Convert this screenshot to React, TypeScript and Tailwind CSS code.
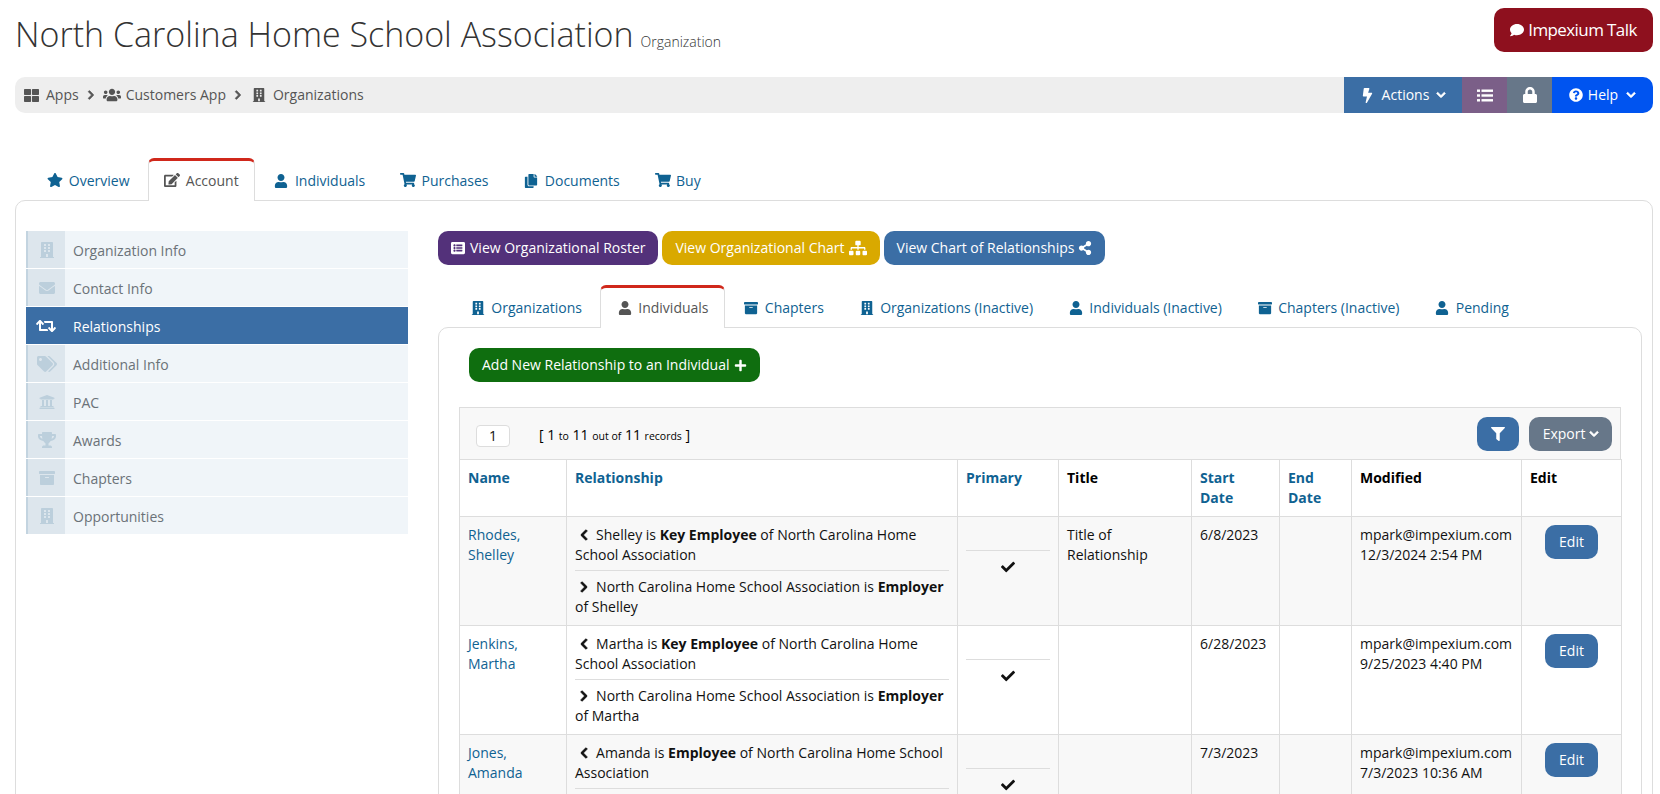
import type { ComponentType, ReactNode } from "react";
import {
  FaArchive,
  FaBolt,
  FaBuilding,
  FaCheck,
  FaChevronDown,
  FaChevronLeft,
  FaChevronRight,
  FaComment,
  FaCopy,
  FaEdit,
  FaEnvelope,
  FaFilter,
  FaListAlt,
  FaLock,
  FaPlus,
  FaQuestionCircle,
  FaRetweet,
  FaShareAlt,
  FaShoppingCart,
  FaSitemap,
  FaStar,
  FaTags,
  FaThLarge,
  FaTrophy,
  FaUniversity,
  FaUser,
  FaUsers,
} from "react-icons/fa";

type IconType = ComponentType<{ size?: number; className?: string }>;

// icono de ancho fijo seguido de un espacio, como fa-fw
function Fw({ icon: Icon, size = 14 }: { icon: IconType; size?: number }) {
  return (
    <span className="inline-flex w-[17.5px] mr-[4.8px] justify-center align-[-2px]">
      <Icon size={size} />
    </span>
  );
}

function Chevron({ icon: Icon }: { icon: IconType }) {
  return (
    <span className="inline-flex w-[17.5px] mr-[3.6px] justify-center align-[-1px]">
      <Icon size={12} className="stroke-[40]" />
    </span>
  );
}

function Tab({ icon, size, label, active }: { icon: IconType; size?: number; label: string; active?: boolean }) {
  return (
    <div
      className={
        active
          ? "relative z-10 -mb-px h-[43px] mr-[2px] px-[15px] pt-[10px] bg-white border border-[#ddd] border-b-0 border-t-[3px] border-t-[#d0281b] rounded-t-[6px] text-[#555] whitespace-nowrap"
          : "h-[42px] mr-[2px] px-[16px] pt-[13px] text-[#0f6292] whitespace-nowrap"
      }
    >
      <Fw icon={icon} size={size} />
      {label}
    </div>
  );
}

function SideItem({ icon: Icon, size = 16, label, active }: { icon: IconType; size?: number; label: string; active?: boolean }) {
  return (
    <div className={active ? "flex h-[37px] mb-px items-center bg-[#3b6ea5] text-white" : "flex h-[37px] mb-px items-center bg-[#f0f5f9] text-[#6b7278]"}>
      <div
        className={
          active
            ? "flex w-[39px] h-full items-center justify-center"
            : "flex w-[39px] h-full items-center justify-center bg-[#dde6ed] border-l-2 border-[#c3d4e0] text-[#bccfdc]"
        }
      >
        <Icon size={size} />
      </div>
      <span className="ml-[8px] mt-[2px]">{label}</span>
    </div>
  );
}

function Btn({ color, children }: { color: string; children: ReactNode }) {
  return (
    <div className={`flex h-[34px] px-[13px] items-center gap-[4px] rounded-[10px] text-white whitespace-nowrap ${color}`}>
      {children}
    </div>
  );
}

const rows = [
  {
    name: ["Rhodes,", "Shelley"],
    first: "Shelley",
    role: "Key Employee",
    title: "Title of Relationship",
    start: "6/8/2023",
    modified: "12/3/2024 2:54 PM",
  },
  {
    name: ["Jenkins,", "Martha"],
    first: "Martha",
    role: "Key Employee",
    title: "",
    start: "6/28/2023",
    modified: "9/25/2023 4:40 PM",
  },
  {
    name: ["Jones,", "Amanda"],
    first: "Amanda",
    role: "Employee",
    title: "",
    start: "7/3/2023",
    modified: "7/3/2023 10:36 AM",
  },
];

const thLink = "border border-[#ddd] px-[8px] pt-[8px] pb-[8px] align-top text-left font-bold text-[#0f6292]";
const thPlain = "border border-[#ddd] px-[8px] pt-[8px] pb-[8px] align-top text-left font-bold text-black";
const td = "border border-[#ddd] px-[8px] pt-[8px] pb-[8px] align-top";

export default function App() {
  return (
    <div className="h-screen overflow-hidden bg-white pl-[15px] pr-[7px] font-['Open_Sans',sans-serif] text-[14px] leading-[20px] text-[#111]">
      {/* HEADER */}
      <header className="flex h-[52px] pt-[8px] justify-between">
        <div className="flex items-baseline pt-[1px] text-[#333]">
          <h1 className="text-[34px] leading-[50px] font-light">North Carolina Home School Association</h1>
          <span className="ml-[7px] text-[14px] font-light">Organization</span>
        </div>
        <div className="flex w-[159px] h-[44px] items-center justify-center gap-[4px] rounded-[10px] bg-[#8e101e] text-[17px] text-white tracking-[-0.6px]">
          <FaComment size={14} />
          Impexium Talk
        </div>
      </header>

      {/* BREADCRUMB */}
      <nav className="flex h-[36px] mt-[25px] items-center justify-between rounded-[10px] bg-[#eee] text-[#555]">
        <div className="flex items-center pl-[9px]">
          <FaThLarge size={15} />
          <span className="ml-[7px]">Apps</span>
          <FaChevronRight size={10} className="mx-[7px] stroke-[40]" />
          <FaUsers size={18} />
          <span className="ml-[5px]">Customers App</span>
          <FaChevronRight size={10} className="mx-[7px] stroke-[40]" />
          <FaBuilding size={14} className="ml-[2px]" />
          <span className="ml-[7px]">Organizations</span>
        </div>
        <div className="flex h-full text-white">
          <div className="flex w-[118px] items-center justify-center gap-[7px] bg-[#3b6ea5]">
            <FaBolt size={15} />
            Actions
            <FaChevronDown size={10} className="stroke-[40]" />
          </div>
          <div className="flex w-[45px] items-center justify-center bg-[#7b5f88]">
            <svg width="16" height="13" viewBox="0 0 16 13" fill="currentColor">
              <rect x="0" y="0.5" width="3" height="2.4" />
              <rect x="4.5" y="0.5" width="11.5" height="2.4" />
              <rect x="0" y="5.3" width="3" height="2.4" />
              <rect x="4.5" y="5.3" width="11.5" height="2.4" />
              <rect x="0" y="10.1" width="3" height="2.4" />
              <rect x="4.5" y="10.1" width="11.5" height="2.4" />
            </svg>
          </div>
          <div className="flex w-[45px] items-center justify-center bg-[#677789]">
            <FaLock size={16} />
          </div>
          <div className="flex w-[101px] items-center justify-center gap-[5px] rounded-r-[10px] bg-[#0054f0]">
            <FaQuestionCircle size={14} />
            Help
            <FaChevronDown size={10} className="ml-[3px] stroke-[40]" />
          </div>
        </div>
      </nav>

      {/* TABS */}
      <div className="flex mt-[45px] pl-[15.5px]">
        <Tab icon={FaStar} size={16} label="Overview" />
        <Tab icon={FaEdit} size={16} label="Account" active />
        <Tab icon={FaUser} label="Individuals" />
        <Tab icon={FaShoppingCart} size={16} label="Purchases" />
        <Tab icon={FaCopy} label="Documents" />
        <Tab icon={FaShoppingCart} size={16} label="Buy" />
      </div>

      {/* PANEL */}
      <main className="flex gap-[30px] pt-[30px] pl-[10px] pr-[10px] pb-[30px] rounded-[10px] border border-[#ddd]">
        <aside className="w-[382px] shrink-0">
          <SideItem icon={FaBuilding} label="Organization Info" />
          <SideItem icon={FaEnvelope} label="Contact Info" />
          <SideItem icon={FaRetweet} size={20} label="Relationships" active />
          <SideItem icon={FaTags} size={20} label="Additional Info" />
          <SideItem icon={FaUniversity} label="PAC" />
          <SideItem icon={FaTrophy} size={18} label="Awards" />
          <SideItem icon={FaArchive} label="Chapters" />
          <SideItem icon={FaBuilding} label="Opportunities" />
        </aside>

        <section className="flex-1 min-w-0">
          <div className="flex gap-[4px]">
            <Btn color="bg-[#53317a]">
              <FaListAlt size={14} className="mr-px" />
              View Organizational Roster
            </Btn>
            <Btn color="bg-[#d9a900]">
              View Organizational Chart
              <FaSitemap size={18} />
            </Btn>
            <Btn color="bg-[#3b6ea5]">
              View Chart of Relationships
              <FaShareAlt size={14} />
            </Btn>
          </div>

          <div className="flex mt-[20px] pl-[15px]">
            <Tab icon={FaBuilding} label="Organizations" />
            <Tab icon={FaUser} label="Individuals" active />
            <Tab icon={FaArchive} label="Chapters" />
            <Tab icon={FaBuilding} label="Organizations (Inactive)" />
            <Tab icon={FaUser} label="Individuals (Inactive)" />
            <Tab icon={FaArchive} label="Chapters (Inactive)" />
            <Tab icon={FaUser} label="Pending" />
          </div>

          <div className="px-[20px] pt-[20px] pb-[30px] rounded-[10px] border border-[#ddd]">
            <div className="flex ml-[10px]">
              <Btn color="bg-[#0f6e0f]">
                Add New Relationship to an Individual
                <FaPlus size={13} />
              </Btn>
            </div>

            {/* TOOLBAR */}
            <div className="flex h-[52px] mt-[25px] pl-[16px] pr-[8px] items-center bg-[#f8f8f8] border border-b-0 border-[#ddd]">
              <div className="flex w-[34px] h-[22px] mt-[4px] items-center justify-center rounded-[4px] border border-[#ddd] bg-white">1</div>
              <div className="ml-[29px] mt-[4px] text-black">
                [ 1 <span className="text-[10.5px]">to</span> 11 <span className="text-[10.5px]">out of</span> 11{" "}
                <span className="text-[10.5px]">records</span> ]
              </div>
              <div className="flex w-[42px] h-[34px] ml-auto items-center justify-center rounded-[10px] bg-[#3b6ea5] text-white">
                <FaFilter size={14} />
              </div>
              <div className="flex h-[34px] ml-[10px] px-[13.5px] items-center gap-[3px] rounded-[10px] bg-[#677789] text-white">
                Export
                <FaChevronDown size={10} className="stroke-[40]" />
              </div>
            </div>

            {/* TABLA */}
            <table className="w-full table-fixed border-collapse">
              <colgroup>
                <col className="w-[107px]" />
                <col className="w-[391px]" />
                <col className="w-[101px]" />
                <col className="w-[133px]" />
                <col className="w-[88px]" />
                <col className="w-[72px]" />
                <col className="w-[170px]" />
                <col className="w-[100px]" />
              </colgroup>
              <thead>
                <tr>
                  <th className={thLink}>Name</th>
                  <th className={thLink}>Relationship</th>
                  <th className={thLink}>Primary</th>
                  <th className={thPlain}>Title</th>
                  <th className={thLink}>Start Date</th>
                  <th className={thLink}>End Date</th>
                  <th className={thPlain}>Modified</th>
                  <th className={thPlain}>Edit</th>
                </tr>
              </thead>
              <tbody>
                {rows.map((row, index) => (
                  <tr key={row.first} className={index % 2 === 0 ? "bg-[#f8f8f8]" : "bg-white"}>
                    <td className={`${td} text-[#0f6292]`}>
                      {row.name[0]}
                      <br />
                      {row.name[1]}
                    </td>
                    <td className={td}>
                      <div className="pb-[5px] border-b border-[#ddd]">
                        <Chevron icon={FaChevronLeft} />
                        {row.first} is <b>{row.role}</b> of North Carolina Home School Association
                      </div>
                      <div className="pt-[6px]">
                        <Chevron icon={FaChevronRight} />
                        North Carolina Home School Association is <b>Employer</b> of {row.first}
                      </div>
                    </td>
                    <td className={td}>
                      <div className="mt-[25px] pt-[9px] border-t border-[#ddd] flex justify-center">
                        <FaCheck size={14} />
                      </div>
                    </td>
                    <td className={td}>{row.title}</td>
                    <td className={td}>{row.start}</td>
                    <td className={td}></td>
                    <td className={td}>
                      mpark@impexium.com
                      <br />
                      {row.modified}
                    </td>
                    <td className={td}>
                      <div className="flex w-[53px] h-[34px] ml-[15px] items-center justify-center rounded-[10px] bg-[#3b6ea5] text-white">Edit</div>
                    </td>
                  </tr>
                ))}
              </tbody>
            </table>
          </div>
        </section>
      </main>
    </div>
  );
}
